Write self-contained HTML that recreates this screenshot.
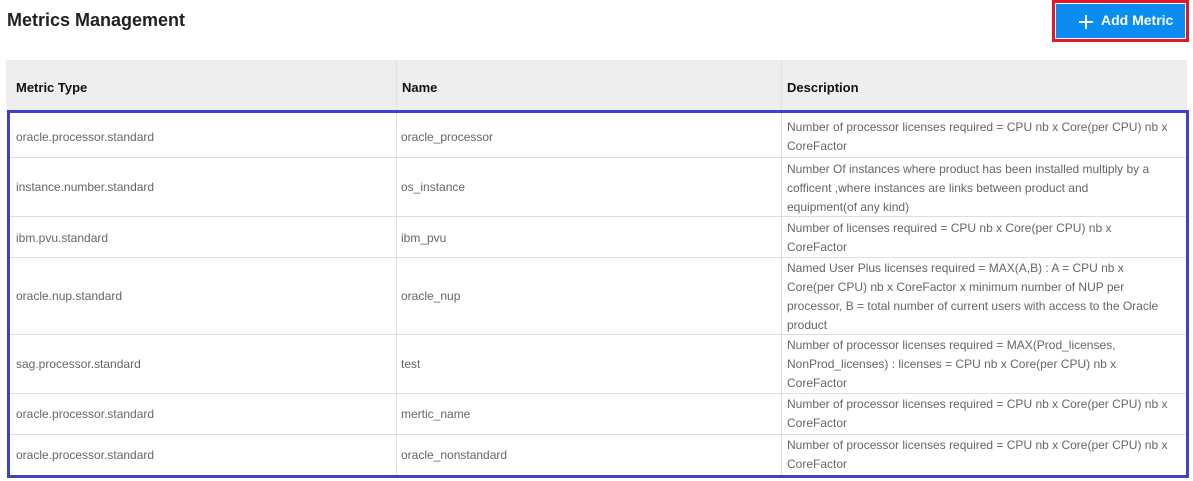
<!DOCTYPE html>
<html><head><style>
*{margin:0;padding:0;box-sizing:border-box}
body{width:1193px;height:481px;background:#fff;font-family:"Liberation Sans",sans-serif;position:relative;overflow:hidden}
h1{position:absolute;left:7px;top:10px;font-size:18px;font-weight:bold;color:#222}
.btn{position:absolute;left:1052px;top:0;width:137px;height:42px;border:3px solid #e0192a;background:#fff}
.btn div{position:absolute;left:1px;top:1px;right:1px;bottom:1px;background:#0a8cf0;color:#fff;font-size:14px;font-weight:bold;line-height:33px;padding-left:45px}
.btn svg{position:absolute;left:22px;top:10px}
.hdr{position:absolute;left:6px;top:60px;width:1181px;height:52px;background:#eeeeee}
.hc{position:absolute;top:0;height:52px;line-height:56px;font-size:13px;font-weight:bold;color:#111}
.vl{position:absolute;top:60px;bottom:6px;width:1px;background:#e0e0e0}
.blue{position:absolute;left:7px;top:110px;width:1182px;height:368px;border:3px solid #3c44c4}
.row{position:absolute;left:10px;width:1176px;border-bottom:1px solid #ddd}
.c{position:absolute;font-size:12px;color:#666;line-height:19px}
.d{left:777px;width:395px;white-space:nowrap}
</style></head><body>
<h1>Metrics Management</h1>
<div class="btn"><div><svg width="16" height="16" viewBox="0 0 16 16"><path d="M8 1v14M1 8h14" stroke="#fff" stroke-width="2"/></svg>Add Metric</div></div>
<div class="hdr">
<div class="hc" style="left:10px">Metric Type</div>
<div class="hc" style="left:396px">Name</div>
<div class="hc" style="left:781px">Description</div>
</div>
<div class="vl" style="left:396px"></div>
<div class="vl" style="left:781px"></div>

<div class="row" style="top:113px;height:45px"><div class="c" style="left:6px;top:15px">oracle.processor.standard</div><div class="c" style="left:391px;top:15px">oracle_processor</div><div class="c d" style="top:5px">Number of processor licenses required = CPU nb x Core(per CPU) nb x<br>CoreFactor</div></div>
<div class="row" style="top:158px;height:59px"><div class="c" style="left:6px;top:20px">instance.number.standard</div><div class="c" style="left:391px;top:20px">os_instance</div><div class="c d" style="top:2px">Number Of instances where product has been installed multiply by a<br>cofficent ,where instances are links between product and<br>equipment(of any kind)</div></div>
<div class="row" style="top:217px;height:41px"><div class="c" style="left:6px;top:12px">ibm.pvu.standard</div><div class="c" style="left:391px;top:12px">ibm_pvu</div><div class="c d" style="top:2px">Number of licenses required = CPU nb x Core(per CPU) nb x<br>CoreFactor</div></div>
<div class="row" style="top:258px;height:77px"><div class="c" style="left:6px;top:29px">oracle.nup.standard</div><div class="c" style="left:391px;top:29px">oracle_nup</div><div class="c d" style="top:1px">Named User Plus licenses required = MAX(A,B) : A = CPU nb x<br>Core(per CPU) nb x CoreFactor x minimum number of NUP per<br>processor, B = total number of current users with access to the Oracle<br>product</div></div>
<div class="row" style="top:335px;height:59px"><div class="c" style="left:6px;top:20px">sag.processor.standard</div><div class="c" style="left:391px;top:20px">test</div><div class="c d" style="top:1px">Number of processor licenses required = MAX(Prod_licenses,<br>NonProd_licenses) : licenses = CPU nb x Core(per CPU) nb x<br>CoreFactor</div></div>
<div class="row" style="top:394px;height:41px"><div class="c" style="left:6px;top:11px">oracle.processor.standard</div><div class="c" style="left:391px;top:11px">mertic_name</div><div class="c d" style="top:1px">Number of processor licenses required = CPU nb x Core(per CPU) nb x<br>CoreFactor</div></div>
<div class="row" style="top:435px;height:40px;border:none"><div class="c" style="left:6px;top:11px">oracle.processor.standard</div><div class="c" style="left:391px;top:11px">oracle_nonstandard</div><div class="c d" style="top:1px">Number of processor licenses required = CPU nb x Core(per CPU) nb x<br>CoreFactor</div></div>
<div class="blue"></div>
</body></html>
